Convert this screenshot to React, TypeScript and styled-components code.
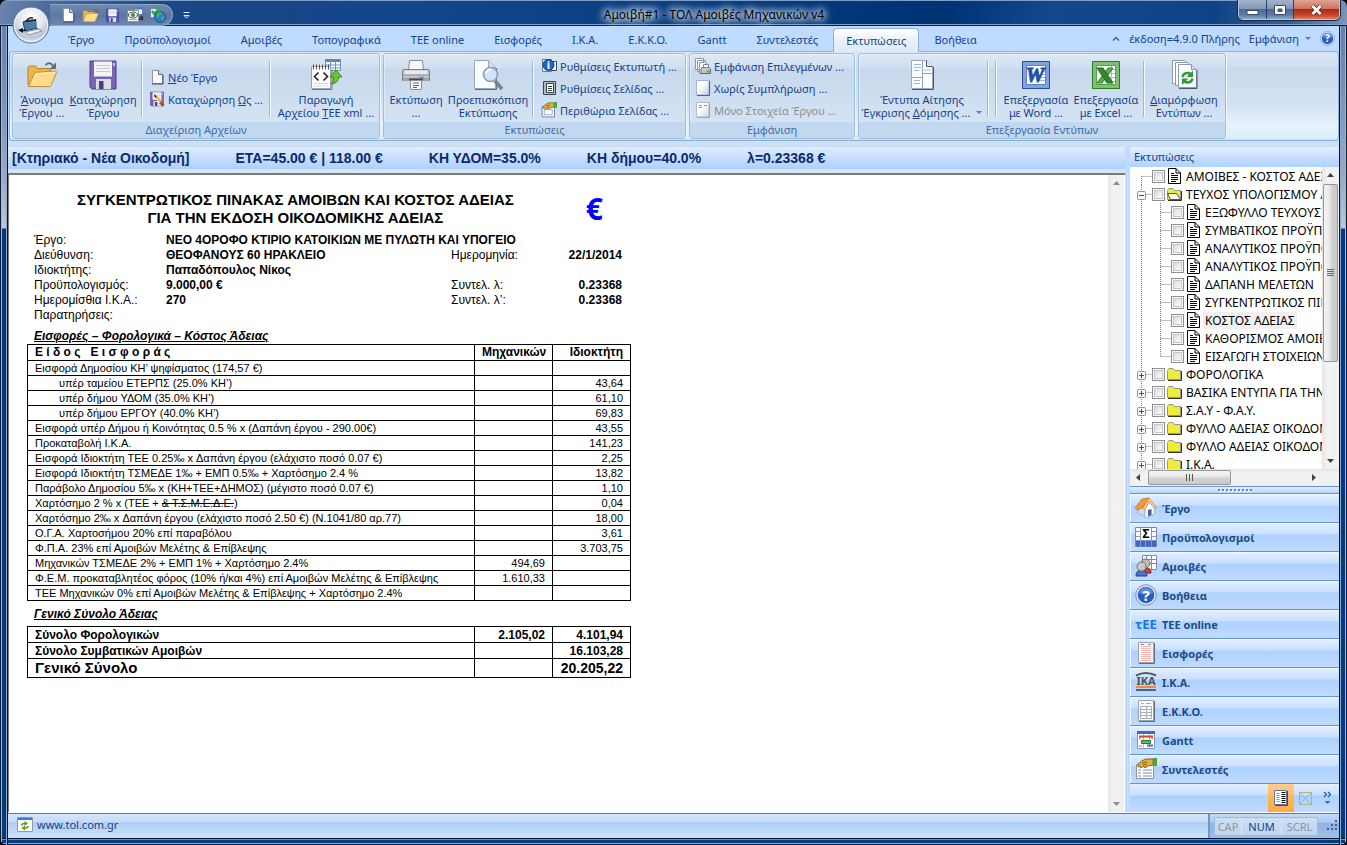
import React from "react";
import styled, { createGlobalStyle, css } from "styled-components";

const ui = `"Noto Sans", "Open Sans", sans-serif`;
const doc = `"Liberation Sans", Arial, sans-serif`;
const navy = "#15428b";

const Global = createGlobalStyle`
  *, *::before, *::after { box-sizing: border-box; }
  body { margin: 0; background: #000; font-family: ${ui}; font-size: 11px; color: ${navy}; }
  button { font: inherit; color: inherit; background: none; border: 0; padding: 0; margin: 0; }
  a { color: inherit; text-decoration: none; }
  h1, h2, p, ul, dl, dd, dt { margin: 0; padding: 0; }
  svg { display: block; flex: none; }
`;

/* ---------- window frame ---------- */

const Frame = styled.div`
  display: flex;
  flex-direction: column;
  height: 100vh;
  min-height: 700px;
  padding: 1px 8px 7px;
  border-radius: 7px;
  overflow: hidden;
  position: relative;
  background:
    linear-gradient(#7f9ec4, #7f9ec4) 0 0 / 100% 1px no-repeat,
    linear-gradient(90deg, #101c30 0 1px, #9fb8d8 1px 2px, transparent 2px 6px, #8fa9cc 6px 7px, #06142c 7px 8px) 0 26px / 8px 100% no-repeat,
    linear-gradient(270deg, #101c30 0 1px, #9fb8d8 1px 2px, transparent 2px 6px, #8fa9cc 6px 7px, #06142c 7px 8px) 100% 26px / 8px 100% no-repeat,
    linear-gradient(0deg, #0a1a30 0 1px, #8fb0d8 1px 2px, transparent 2px 5px, #6d93c2 5px 6px, #06142c 6px 7px) 0 100% / 100% 7px no-repeat,
    linear-gradient(180deg, #5f7ba8 0, #6f88b0 60px, #9aabc6 180px, #bcc7d8 228px, #003a7d 229px, #003c84 100%);
`;

const TitleBar = styled.header`
  position: relative;
  display: flex;
  align-items: flex-start;
  height: 25px;
  flex: none;
  margin: 0 -8px;
  padding: 0 7px 0 50px;
  border-bottom: 1px solid #0a1c3c;
  box-shadow: inset 0 -1px 0 #7d9fca;
  background: linear-gradient(100deg, #6a84ad 0, #4a6a9c 50px, #1d4785 160px, #12458c 420px, #0d3f84 45%, #003274 70%, #14488d 78%, #0f4285 90%, #3a6299 96%, #7d95b8 100%);
`;

const OrbButton = styled.button`
  position: absolute;
  left: 12px;
  top: 5px;
  width: 38px;
  height: 38px;
  border-radius: 50%;
  z-index: 3;
`;

const QuickBar = styled.div`
  display: flex;
  align-items: center;
  gap: 6px;
  height: 22px;
  margin-top: 3px;
  padding: 0 6px 0 10px;
  border: 1px solid #8ba3c6;
  border-left: 0;
  border-radius: 0 11px 11px 0;
  background: linear-gradient(#7189ae, #5c78a3 50%, #6c86ae);
`;

const QuickMore = styled.button`
  margin: 10px 0 0 10px;
`;

const Title = styled.div`
  flex: 1;
  text-align: center;
  font-size: 12px;
  line-height: 27px;
  color: #000;
  text-shadow: 0 0 6px #fff, 0 0 8px #dfe9f8, 0 0 10px #c7d7ee, 0 0 12px #b3c8e6;
`;

const WindowButtons = styled.div`
  display: flex;
  height: 20px;
  margin-top: -1px;
  border: 1px solid #b6c6dc;
  border-top: 0;
  border-radius: 0 0 5px 5px;
  overflow: hidden;
  box-shadow: 0 0 0 1px #14284a;
`;

const WindowButton = styled.button<{ $close?: boolean }>`
  display: flex;
  align-items: center;
  justify-content: center;
  width: ${(p) => (p.$close ? 46 : 27)}px;
  & + & { border-left: 1px solid #26406c; }
  background: ${(p) =>
    p.$close
      ? "linear-gradient(#e0a393, #cf6f5c 48%, #b02a12 50%, #c4472c 80%, #e08060)"
      : "linear-gradient(#a3b4cc, #7f96b8 48%, #4d6a95 50%, #5f7da8 80%, #8da8cc)"};
`;

const Client = styled.div`
  flex: 1;
  min-height: 0;
  display: flex;
  flex-direction: column;
  background: #bfdbff;
`;

/* ---------- tabs ---------- */

const TabRow = styled.nav`
  display: flex;
  align-items: flex-end;
  height: 25px;
  flex: none;
  padding: 0 4px 0 45px;
`;

const Tab = styled.a<{ $active?: boolean }>`
  height: 23px;
  line-height: 22px;
  padding: 0 14px;
  border: 1px solid transparent;
  border-bottom: 0;
  white-space: nowrap;
  ${(p) =>
    p.$active &&
    css`
      position: relative;
      z-index: 2;
      height: 24px;
      margin-bottom: -1px;
      padding: 0 12px;
      border-color: #8db2e3;
      border-radius: 4px 4px 0 0;
      background: linear-gradient(#fff, #e6effa 60%, #dfeaf6);
      line-height: 23px;
    `}
`;

const TabTools = styled.div`
  display: flex;
  align-items: center;
  gap: 9px;
  margin-left: auto;
  height: 25px;
  white-space: nowrap;
`;

/* ---------- ribbon ---------- */

const Ribbon = styled.section`
  display: flex;
  gap: 3px;
  flex: none;
  height: 90px;
  margin: 0 0 0 1px;
  padding: 1px 2px;
  border: 1px solid #8db2e3;
  border-radius: 4px;
  border-bottom-color: #8aaedd;
  background: linear-gradient(#dbe6f4, #d0deef 16%, #c8d9ed 18%, #d4e3f3 60%, #e7f2fd 85%, #d5f0fb);
  box-shadow: inset 0 -1px 0 #b8ecfb;
`;

const Group = styled.div<{ $w: number }>`
  display: flex;
  flex-direction: column;
  width: ${(p) => p.$w}px;
  border: 1px solid #9ebfdb;
  border-radius: 3px;
  box-shadow: inset 1px 1px 0 #f0f6fc88, 1px 0 0 #eef5fc;
  background: linear-gradient(#dee8f5, #d1dfef 16%, #c7d8ed 18%, #d8e6f5 100%);
`;

const GroupBody = styled.div`
  display: flex;
  align-items: flex-start;
  height: 68px;
  padding: 1px 2px 0;
`;

const GroupLabel = styled.div`
  height: 16px;
  line-height: 15px;
  text-align: center;
  color: #3e6aaa;
  background: #c2d8f0;
  border-radius: 0 0 3px 3px;
`;

const BigButton = styled.button<{ $w: number }>`
  display: flex;
  flex-direction: column;
  align-items: center;
  gap: 2px;
  width: ${(p) => p.$w}px;
  flex: none;
  padding-top: 4px;
  line-height: 13px;
  white-space: nowrap;
  text-align: center;
`;

const Arrow = styled.span`
  display: inline-block;
  margin: 0 0 3px 6px;
  border: 3px solid transparent;
  border-top-color: #5a7fb5;
  border-bottom: 0;
`;

const Divider = styled.span<{ $tight?: boolean }>`
  width: 2px;
  height: 56px;
  margin: 6px 4px 0;
  margin-left: ${(p) => (p.$tight ? 2 : 4)}px;
  border-left: 1px solid #9ab8dc;
  border-right: 1px solid #f4f9ff;
  flex: none;
`;

const SmallStack = styled.div<{ $low?: boolean }>`
  display: flex;
  flex-direction: column;
  padding: ${(p) => (p.$low ? "11px 0 0 2px" : "0 0 0 3px")};
`;

const SmallButton = styled.button`
  display: flex;
  align-items: center;
  gap: 3px;
  height: 22px;
  white-space: nowrap;
  &:disabled { color: #8d8d8d; }
`;

/* ---------- work area ---------- */

const Work = styled.div`
  flex: 1;
  min-height: 0;
  display: flex;
  gap: 5px;
  padding-top: 6px;
  background: linear-gradient(#cfe0f3 0 5px, #bfdbff 6px);
`;

const MainColumn = styled.main`
  flex: 1;
  min-width: 0;
  display: flex;
  flex-direction: column;
`;

const InfoBar = styled.div`
  display: flex;
  align-items: center;
  gap: 46px;
  height: 22px;
  flex: none;
  padding-left: 4px;
  margin-bottom: 4px;
  background: linear-gradient(#e0edff, #c6deff 50%, #aed0ff);
  box-shadow: 0 4px 0 #d6e5f5;
  font: bold 14px ${doc};
  color: #0b2a68;
  white-space: nowrap;
`;

const Viewer = styled.div`
  flex: 1;
  min-height: 0;
  display: flex;
  border: 1px solid #7b7b76;
  border-width: 2px 0 0 1px;
  background: #fff;
  overflow: hidden;
`;

const Page = styled.article`
  flex: 1;
  min-width: 0;
  padding: 16px 0 0 18px;
  font-family: ${doc};
  color: #000;
`;

const Sheet = styled.div`
  width: 604px;
`;

const Heading = styled.div`
  display: flex;
  align-items: center;
  justify-content: space-between;
  padding: 0 28px 0 50px;
`;

const DocTitle = styled.h1`
  font-size: 15px;
  line-height: 18px;
  text-align: center;
`;

const Euro = styled.span`
  font-family: ${ui};
  font-size: 30px;
  font-weight: bold;
  line-height: 36px;
  color: #0000ff;
`;

const Fields = styled.dl`
  display: grid;
  grid-template-columns: 132px 285px 92px 79px;
  padding: 6px 8px 0 7px;
  font-size: 12px;
  line-height: 15px;
  white-space: nowrap;
  dd { font-weight: bold; }
`;

const Amount = styled.dd`
  text-align: right;
`;

const Wide = styled.dd`
  grid-column: 2 / -1;
`;

const Section = styled.h2`
  padding: 6px 0 0 7px;
  font-size: 12px;
  font-style: italic;
  line-height: 15px;
  text-decoration: underline;
`;

const Data = styled.table<{ $totals?: boolean }>`
  width: 604px;
  table-layout: fixed;
  border-collapse: collapse;
  margin-top: ${(p) => (p.$totals ? 4 : 0)}px;
  font-size: ${(p) => (p.$totals ? 12 : 11)}px;
  font-weight: ${(p) => (p.$totals ? "bold" : "normal")};
  th, td {
    height: ${(p) => (p.$totals ? 16 : 15)}px;
    padding: 0 7px;
    border: 1px solid #000;
    line-height: 14px;
    text-align: right;
    white-space: nowrap;
  }
  th:first-child, td:first-child { text-align: left; }
  thead th { height: 16px; font-size: 12px; line-height: 15px; }
`;

const Spaced = styled.span`
  white-space: pre;
`;

const GrandRow = styled.tr`
  td, th { height: 19px; font-size: 14px; line-height: 18px; }
  th { font-size: 15px; }
`;

const Indent = styled.span`
  padding-left: 24px;
`;

/* ---------- scroll bars ---------- */

const VScroll = styled.div<{ $edge?: boolean }>`
  display: flex;
  flex-direction: column;
  width: 17px;
  flex: none;
  background: linear-gradient(90deg, #e6e6e6, #f2f2f2 30%, #f0f0f0);
  border-right: ${(p) => (p.$edge ? "1px solid #fff" : "0")};
`;

const HScroll = styled.div`
  display: flex;
  align-items: center;
  height: 17px;
  flex: none;
  padding-right: 17px;
  background: linear-gradient(#e6e6e6, #f2f2f2 30%, #f0f0f0);
`;

const ScrollButton = styled.button`
  display: flex;
  align-items: center;
  justify-content: center;
  width: 17px;
  height: 17px;
  flex: none;
`;

const Spacer = styled.div`
  flex: 1;
`;

const VThumb = styled.div`
  display: flex;
  align-items: center;
  justify-content: center;
  width: 15px;
  height: 178px;
  margin-left: 1px;
  border: 1px solid #979797;
  border-radius: 2px;
  background: linear-gradient(90deg, #f5f5f5, #e6e6e6 48%, #d4d4d4 52%, #c9c9c9);
`;

const HThumb = styled.div`
  display: flex;
  align-items: center;
  justify-content: center;
  width: 83px;
  height: 15px;
  margin-left: 1px;
  border: 1px solid #979797;
  border-radius: 2px;
  background: linear-gradient(#f5f5f5, #e6e6e6 48%, #d4d4d4 52%, #c9c9c9);
`;

/* ---------- side panel ---------- */

const Side = styled.aside`
  display: flex;
  flex-direction: column;
  width: 209px;
  flex: none;
`;

const SideTitle = styled.h2`
  height: 20px;
  flex: none;
  padding-left: 4px;
  font-size: 11px;
  font-weight: normal;
  line-height: 20px;
  background: linear-gradient(#e3efff, #c8dfff 50%, #afd2ff);
`;

const TreeBox = styled.div`
  flex: 1;
  min-height: 0;
  display: flex;
  background: #fff;
`;

const Tree = styled.ul`
  flex: 1;
  min-width: 0;
  overflow: hidden;
  list-style: none;
  padding-left: 2px;
`;

const TreeRow = styled.li`
  display: flex;
  align-items: center;
  height: 18px;
  white-space: nowrap;
`;

const Check = styled.input`
  appearance: none;
  width: 13px;
  height: 13px;
  margin: 0 2px 0 0;
  flex: none;
  border: 1px solid #8e8f8f;
  background: linear-gradient(135deg, #cfd3d8, #fbfbfb 80%);
  box-shadow: inset 0 0 0 1px #f8f8f8, inset 0 0 0 2px #c4c8cd;
`;

const TreeLabel = styled.label<{ $selected?: boolean }>`
  margin-left: 2px;
  padding: 0 2px;
  color: #000;
  font-size: 12px;
  line-height: 17px;
  background: ${(p) => (p.$selected ? "#f0f0f0" : "none")};
`;

const Splitter = styled.div`
  display: flex;
  align-items: center;
  justify-content: center;
  height: 8px;
  flex: none;
  border-top: 1px solid #6593cf;
  border-bottom: 1px solid #6593cf;
  background: linear-gradient(#e3efff, #b3d4ff);
`;

const NavButton = styled.button`
  display: flex;
  align-items: center;
  gap: 5px;
  height: 29px;
  flex: none;
  padding-left: 5px;
  border-bottom: 1px solid #6593cf;
  background: linear-gradient(#e3efff, #c8dfff 40%, #add1ff 42%, #c0dbff);
  box-shadow: inset 1px 1px 0 #f2f8ff;
  font-weight: bold;
  color: #1f4a86;
`;

const NavFooter = styled.div`
  display: flex;
  align-items: stretch;
  justify-content: flex-end;
  height: 28px;
  flex: none;
  padding-right: 1px;
  background: linear-gradient(#e3efff, #c8dfff 40%, #add1ff 42%, #c0dbff);
`;

const FooterButton = styled.button<{ $on?: boolean }>`
  display: flex;
  align-items: center;
  justify-content: center;
  width: ${(p) => (p.$on ? 26 : 22)}px;
  background: ${(p) => (p.$on ? "linear-gradient(#ffcf92, #ffb85c 45%, #ffab3f)" : "none")};
`;

/* ---------- status bar ---------- */

const Status = styled.footer`
  display: flex;
  align-items: stretch;
  height: 26px;
  flex: none;
  border-top: 1px solid #f4f9ff;
  box-shadow: inset 0 1px 0 #567db0;
  background: linear-gradient(#d6e6fa, #c6dbf5 35%, #b0cff5 38%, #c9def7 90%);
`;

const StatusLink = styled.a`
  display: flex;
  align-items: center;
  flex: 1;
  gap: 4px;
  padding: 0 0 2px 9px;
`;

const StatusKeys = styled.div`
  display: flex;
  align-items: center;
  width: 131px;
  margin-top: 1px;
  padding-left: 4px;
  border-left: 2px solid #7396c4;
  background: linear-gradient(#c5dbf7, #a9c8f0 35%, #8fb3e3 38%, #9dbfe9);
`;

const KeyBox = styled.div`
  display: flex;
  height: 19px;
  border: 1px solid #9dbbe0;
  border-radius: 2px;
  background: linear-gradient(#cfe0f5, #bdd3ee);
`;

const Key = styled.span<{ $on?: boolean; $w: number }>`
  width: ${(p) => p.$w}px;
  text-align: center;
  line-height: 18px;
  color: ${(p) => (p.$on ? navy : "#8d95a3")};
  & + & { border-left: 1px solid #d9e7f8; }
`;

/* ---------- icons ---------- */

type IconProps = { s?: number };

const Glyph = styled.text`
  font-family: ${ui};
  font-weight: bold;
  text-anchor: middle;
`;

const NewDoc = ({ s = 16 }: IconProps) => (
  <svg width={s} height={s} viewBox="0 0 16 16">
    <path d="M3.5 1.5h6l4 4v9h-10z" fill="#fdfdff" stroke="#8a96ac" />
    <path d="M3 15h11V6" stroke="#3f4b63" fill="none" />
    <path d="M9.5 1.5v4h4" fill="#cfdaea" stroke="#5c6880" />
  </svg>
);

const Folder = ({ s = 32 }: IconProps) => (
  <svg width={s} height={s} viewBox="0 0 32 32">
    <path d="M2 8.5q0-1.500 1.500-1.500h6l2 2.500h11.500q1.500 0 1.500 1.500v3l-3 13h-17.500q-2 0-2-2z" fill="#e9b44c" stroke="#b98325" />
    <path d="M2.500 27.500l6-13q.5-1 2-1.200l18-1.300q2.500 0 2 1.500l-5.500 13q-.5 1.200-2 1.200z" fill="#fcdc8a" stroke="#c58f2f" />
    <path d="M5.500 25l4.500-10 18-1.500" stroke="#fff3c8" fill="none" />
    <path d="M19.500 6q4-4 8 1" stroke="#5c6d85" strokeWidth="1.8" fill="none" />
    <path d="M30 3.500v6.500h-6.500z" fill="#5c6d85" />
  </svg>
);

const Save = ({ s = 32, pen = false, blue = false }: IconProps & { pen?: boolean; blue?: boolean }) => (
  <svg width={s} height={s} viewBox="0 0 32 32">
    <path d="M3 2h26v28H5l-2-2z" fill={blue ? "#3c50c0" : "#7665b5"} stroke="#4d3f8c" />
    <path d="M7 2.500h18v15H7z" fill="#f4f4f6" />
    <path d="M9 6.500h14M9 9.500h14M9 12.500h14" stroke="#c9c9d2" />
    <path d="M9 20h15v10H9z" fill="#dcdde4" />
    <path d="M12 22h4.500v8H12z" fill="#4b3d83" />
    <path d="M26 4h2v3h-2z" fill="#cbc4ea" />
    {pen && (
      <>
        <path d="M12 10l12 13" stroke="#fff" strokeWidth="6" />
        <path d="M14 11l12 13" stroke="#e8b33c" strokeWidth="5" />
        <path d="M25 20l6 8-3 3-8-6z" fill="#a8542c" />
        <path d="M10 7l6 3-4 4z" fill="#222" />
      </>
    )}
  </svg>
);

const XmlIcon = ({ s = 32 }: IconProps) => (
  <svg width={s} height={s} viewBox="0 0 32 32">
    <path d="M15.500.5h15v11h-15z" fill="#fff" stroke="#6f8fc0" />
    <path d="M15.500.5h15v2.500h-15z" fill="#5b82c4" />
    <path d="M15 6h16M15 9h16M20.500 1v10M25.500 1v10" stroke="#6f8fc0" />
    <path d="M1.500 7.500h19v22h-19z" fill="#fff" stroke="#9aa3b0" />
    <path d="M2 30.500h20v-20" stroke="#6f7784" fill="none" />
    <path d="M3.500 5.500v5M6.500 5.500v5M9.500 5.500v5M12.500 5.500v5M15.500 5.500v5M18.500 5.500v5" stroke="#555" />
    <path d="M8.500 13.500l-4 4 4 4M13.500 13.500l4 4-4 4" stroke="#222" strokeWidth="1.6" fill="none" />
    <path d="M4 24.500h14M4 27h14" stroke="#d5d9e0" />
    <path d="M26 11l6 7h-3.500q0 6-7 7 3-3 2-7H20z" fill="#6cc82e" stroke="#3c8a14" />
  </svg>
);

const Printer = ({ s = 32 }: IconProps) => (
  <svg width={s} height={s} viewBox="0 0 32 32">
    <path d="M9.500 1.500h13l1 10h-15z" fill="#f7f8fb" stroke="#8b8f98" />
    <path d="M2.500 12q0-1.500 2-1.500h23q2 0 2 1.500v9.500h-27z" fill="#c9cacd" stroke="#7a7c82" />
    <path d="M5 11.500h22v4H5z" fill="#e9eaec" />
    <path d="M2.500 16h27" stroke="#8a8c92" />
    <path d="M3 18.500h26V22H3z" fill="#a3a5ab" />
    <path d="M19 17.500h5v2h-5z" fill="#4fa0ff" />
    <path d="M9 19.500h14v2H9z" fill="#46484e" />
    <path d="M10.500 21.500h11v9h-11z" fill="#fbfbfd" stroke="#8b8f98" />
    <path d="M13 24h6M13 26.500h6M13 28.500h4" stroke="#5d6570" />
  </svg>
);

const Preview = ({ s = 32 }: IconProps) => (
  <svg width={s} height={s} viewBox="0 0 32 32">
    <path d="M2.500 1.500h14l7 7v21h-21z" fill="#fbfcfe" stroke="#9aa5b8" />
    <path d="M3 30.500h21.500V9" stroke="#606a7c" fill="none" />
    <path d="M16.500 1.500v7h7" fill="#d5dfed" stroke="#9aa5b8" />
    <path d="M23 22l7 8" stroke="#7d828c" strokeWidth="3.5" />
    <circle cx="18.500" cy="15.500" r="7" fill="#cfe4fb" stroke="#8c9db5" strokeWidth="1.6" />
    <path d="M14 14.500q1-4 5-4" stroke="#fff" strokeWidth="2" fill="none" />
  </svg>
);

const InfoIcon = () => (
  <svg width="16" height="16" viewBox="0 0 16 16">
    <path d="M1.500 1.500h9v12h-9z" fill="#fff" stroke="#6b7686" />
    <path d="M10.500 3.500h5v9h-5z" fill="#fff" stroke="#39465c" />
    <circle cx="7.500" cy="7" r="5.500" fill="#1c67c8" stroke="#0d4593" />
    <Glyph x="7.500" y="11" fontSize="11" fill="#fff">i</Glyph>
  </svg>
);

const PageSetup = () => (
  <svg width="16" height="16" viewBox="0 0 16 16">
    <path d="M2.500 1.500h12v13h-12z" fill="#b4b9c2" stroke="#39424f" />
    <path d="M5.500 3.500h7v9h-7z" fill="#fff" stroke="#39424f" />
    <path d="M7 6.500h4M7 8.500h4M7 10.500h4" stroke="#39424f" />
  </svg>
);

const HandForm = ({ s = 16, margins = false }: IconProps & { margins?: boolean }) => (
  <svg width={s} height={s} viewBox="0 0 22 22">
    <path d="M1.500 6.500h17v14h-17z" fill="#fdfdff" stroke={margins ? "#4a5f8c" : "#8b93a5"} />
    {margins ? (
      <path d="M4.500 10.500h11v7h-11z" fill="none" stroke="#2f62e0" strokeDasharray="2 1" />
    ) : (
      <path d="M3 12h3M3 15h3M3 18h3M8 12h9M8 15h9M8 18h9" stroke="#7f8fb8" />
    )}
    <path d="M3 6q4-4 8-5h7v6l-5 1-3 2-1-2-3 2-1-2-2 1z" fill="#dfae45" stroke="#8a6417" />
    <path d="M7 5l5-1M8 7l4-1" stroke="#8a6417" />
    <path d="M18 0h4v8h-4z" fill="#45a836" />
  </svg>
);

const Stack = () => (
  <svg width="16" height="16" viewBox="0 0 16 16">
    <path d="M.5.5h8v11h-8zM2.500 2.500h8v11h-8z" fill="#fff" stroke="#8a96aa" />
    <path d="M4.500 4.500h6l3 3v8h-9z" fill="#fdfdff" stroke="#8a96aa" />
    <path d="M7 9.500h7l1.500 2v4H6v-4z" fill="#c5c8cf" stroke="#5d6470" />
    <path d="M8.500 6.500h5v3h-5z" fill="#fff" stroke="#7b8290" />
    <path d="M11.500 12.500h3v2h-3z" fill="#34c32c" />
  </svg>
);

const BlankPage = ({ grey = false }: { grey?: boolean }) => (
  <svg width="16" height="16" viewBox="0 0 16 16">
    <defs>
      <linearGradient id={grey ? "pageGrey" : "pageBlue"} x1="0" y1="0" x2="1" y2="1">
        <stop offset=".4" stopColor="#fff" />
        <stop offset="1" stopColor={grey ? "#ccd2de" : "#b9cdf0"} />
      </linearGradient>
    </defs>
    <path d="M1.500.5H14V15H1.500z" fill={`url(#${grey ? "pageGrey" : "pageBlue"})`} stroke={grey ? "#b4bbc8" : "#a3b4d6"} />
    <path d="M2 15.500h12.500V1" stroke={grey ? "#9aa1af" : "#4c639a"} fill="none" />
    {grey && <path d="M4 3.500h3M9 3.500h3M4 5.500h3" stroke="#8f96a5" />}
  </svg>
);

const FormPage = () => (
  <svg width="32" height="32" viewBox="0 0 32 32">
    <path d="M5.500 1.500h15l6 6v22h-21z" fill="#fbfcff" stroke="#9aa8c4" />
    <path d="M6 30.500h21.500V8" stroke="#4a5670" fill="none" />
    <path d="M20.500 1.500v6h6" fill="#dde6f3" stroke="#4a5670" />
    <path d="M16.500 2v28M6 18.500h10M16 14.500h10" stroke="#8fa2cc" />
    <path d="M8 5.500h7M8 8.500h7M8 11.500h5M18.500 11h6M8 21.500h6M8 24.500h6" stroke="#9db3e0" />
  </svg>
);

const Serif = styled.text`
  font: italic bold 21px "Liberation Serif", serif;
  text-anchor: middle;
`;

const WordIcon = () => (
  <svg width="32" height="32" viewBox="0 0 32 32">
    <path d="M2.500 2.500h27v27h-27z" fill="#7fa3e0" stroke="#2b4f9e" />
    <path d="M6.500 6.500h19v19h-19z" fill="#fff" stroke="#5b80c8" />
    <path d="M20 9.500h5M21 12.500h4M21 15.500h4M20 18.500h5M19 21.500h6" stroke="#9fb6e4" />
    <Serif x="15" y="23" fill="#2450a8" stroke="#2450a8">W</Serif>
  </svg>
);

const ExcelIcon = () => (
  <svg width="32" height="32" viewBox="0 0 32 32">
    <path d="M2.500 2.500h27v27h-27z" fill="#7cc070" stroke="#2c7a2a" />
    <path d="M6.500 6.500h19v19h-19z" fill="#fff" stroke="#55a04c" />
    <path d="M17 10.500h8M17 14.500h8M17 18.500h8M17 22.500h8M21.500 7v18" stroke="#9ccf8c" />
    <path d="M7 24L18 9h5L12 24z" fill="#5fb04e" stroke="#2c7a2a" />
    <path d="M7 9h6l10 15h-6z" fill="#2f8a2a" stroke="#1d6a1a" />
  </svg>
);

const Refresh = () => (
  <svg width="32" height="32" viewBox="0 0 32 32">
    <path d="M4.500 1.500h12l4 4v19h-16z" fill="#fff" stroke="#8e99ae" />
    <path d="M7.500 3.500h12l4 4v19h-16z" fill="#fff" stroke="#8e99ae" />
    <path d="M10.500 5.500h13l5 5v18h-18z" fill="#fbfcff" stroke="#8e99ae" />
    <path d="M11 29.500h18V11" stroke="#4c566b" fill="none" />
    <path d="M23.500 5.500v5h5" fill="#cfdaea" stroke="#8e99ae" />
    <path d="M14.500 18q1-4.500 6-4l2 1" stroke="#2f9a3a" strokeWidth="2.6" fill="none" />
    <path d="M25 11.500v6.500h-6.500z" fill="#2f9a3a" />
    <path d="M24.500 19.500q-1 4.500-6 4l-2-1" stroke="#2f9a3a" strokeWidth="2.6" fill="none" />
    <path d="M14 26v-6.500h6.500z" fill="#2f9a3a" />
  </svg>
);

const Help = ({ s = 16 }: IconProps) => (
  <svg width={s} height={s} viewBox="0 0 22 22">
    <circle cx="11" cy="11" r="10.3" fill="#dfe7f6" stroke="#7f93bb" />
    <circle cx="11" cy="11" r="8.3" fill="#2a5cc4" />
    <path d="M4 9q2-6 7-6t7 6q-7 3-14 0z" fill="#5b8ae2" />
    <Glyph x="11" y="16.500" fontSize="15" fill="#fff">?</Glyph>
  </svg>
);

const XmlQuick = () => (
  <svg width="18" height="16" viewBox="0 0 18 16">
    <path d="M8.500.5h8v7h-8z" fill="#fff" stroke="#5b82c4" />
    <path d="M8.500 1.500h8" stroke="#4a78c8" strokeWidth="2" />
    <path d="M1.500 3.500h11v11h-11z" fill="#fff" stroke="#8a93a3" />
    <ellipse cx="7" cy="8" rx="4.500" ry="3" fill="#e6eef0" stroke="#555" />
    <circle cx="7" cy="8" r="2" fill="#3d9442" />
    <path d="M3 12.500h8" stroke="#9aa" />
    <path d="M13 12l3-3M13.500 12.500h3v-3" stroke="#333" strokeWidth="1.5" fill="none" />
  </svg>
);

const GlobeQuick = () => (
  <svg width="16" height="16" viewBox="0 0 16 16">
    <path d="M.5 1.500h9v9h-9z" fill="#dfeaf7" stroke="#6a87b5" />
    <path d="M2 4l2.500 3L10 0" stroke="#2fae2c" strokeWidth="2.5" fill="none" />
    <circle cx="10" cy="10" r="5.500" fill="#2c79d2" stroke="#1b4f94" />
    <path d="M7 6.500q3-2 5-.5-1 2.500-3 2.500l-1 3q-2-2-1-5zM11 10l3-1q1 3-2 5z" fill="#4bb648" />
  </svg>
);

const Orb = () => (
  <svg width="38" height="38" viewBox="0 0 38 38">
    <defs>
      <radialGradient id="orb" cx=".5" cy=".3" r=".7">
        <stop offset="0" stopColor="#fff" />
        <stop offset=".5" stopColor="#e1e7f0" />
        <stop offset=".8" stopColor="#b9c4d5" />
        <stop offset="1" stopColor="#f4f8fd" />
      </radialGradient>
    </defs>
    <circle cx="19" cy="19" r="18" fill="url(#orb)" stroke="#5a6f92" />
    <circle cx="19" cy="19" r="16.500" fill="none" stroke="#f2f6fb" />
    <path d="M11 16l13-2 2 8-13 3z" fill="#4a7ca8" stroke="#253c55" />
    <path d="M15 14q2-3 6-2" stroke="#222" strokeWidth="1.5" fill="none" />
    <path d="M11 16l3-2 12-1-2 2z" fill="#20262e" />
    <path d="M6 24l5-2v5z" fill="#111" />
    <path d="M9 24.500h5" stroke="#111" strokeWidth="1.5" />
    <path d="M13 26l14-3 3 2-13 4z" fill="#eef1f5" stroke="#8a93a0" />
    <path d="M25 12l1 10" stroke="#e8eef5" strokeWidth="2" />
  </svg>
);

const TreeDoc = () => (
  <svg width="15" height="16" viewBox="0 0 15 16">
    <path d="M1.500.5H9L13.500 5v10.500h-12z" fill="#fff" stroke="#000" />
    <path d="M9 .5V5h4.500" fill="none" stroke="#000" />
    <path d="M4 5.500h3M4 7.500h7M4 9.500h7M4 11.500h7M4 13.500h5" stroke="#000" />
  </svg>
);

const TreeFolder = ({ open = false }: { open?: boolean }) => (
  <svg width="15" height="16" viewBox="0 0 15 16">
    <defs>
      <pattern id="dither" width="2" height="2" patternUnits="userSpaceOnUse">
        <path d="M0 0h2v2H0z" fill="#f2ef3c" />
        <path d="M0 0h1v1H0zM1 1h1v1H1z" fill="#dcdcb4" />
      </pattern>
    </defs>
    <path d="M.5 13.500v-9l1.500-2h4l1.500 2h6v9z" fill="url(#dither)" stroke="#98977c" />
    <path d="M1 14.500h13.500V5" stroke="#333" fill="none" />
    {open && <path d="M3.500 13.500L.5 7.500h9l4 6z" fill="#fbfbe0" stroke="#555" />}
  </svg>
);

type RailProps = { w: number; half?: "top" | "bottom"; stub?: boolean; box?: "+" | "-" };

const Rail = ({ w, half, stub, box }: RailProps) => {
  const x = w - 10.5;
  return (
    <svg width={w} height="18" viewBox={`0 0 ${w} 18`}>
      <path d={`M${x} ${half === "bottom" ? 9 : 0}V${half === "top" ? 10 : 18}`} stroke="#808080" strokeDasharray="1 1" />
      {stub && <path d={`M${x} 9.5H${w}`} stroke="#808080" strokeDasharray="1 1" />}
      {box && (
        <>
          <rect x={x - 4} y="6.5" width="8" height="8" rx="1" fill="#f6f6f6" stroke="#919191" />
          <path d={`M${x - 2.5} 10.5h5` + (box === "+" ? `M${x} 8v5` : "")} stroke="#33509a" />
        </>
      )}
    </svg>
  );
};

const triangles = { u: "M1 6l3.5-4L8 6z", d: "M1 3l3.5 4L8 3z", l: "M6 1L2 4.5 6 8z", r: "M3 1l4 3.5L3 8z" };

const Tri = ({ dir, c = "#404040" }: { dir: keyof typeof triangles; c?: string }) => (
  <svg width="9" height="9" viewBox="0 0 9 9">
    <path d={triangles[dir]} fill={c} />
  </svg>
);

const House = () => (
  <svg width="22" height="22" viewBox="0 0 22 22">
    <path d="M3 9l7-5 3 7v9.500l-10-4z" fill="#c9dcf2" stroke="#8fa5c8" strokeWidth=".7" />
    <path d="M10 11l4.500-6 5 6v6l-8 4-1.500-1z" fill="#f4f7fc" stroke="#8a9ab5" strokeWidth=".7" />
    <path d="M0 11L7 2l7-1-6 9-5 3z" fill="#f39a38" stroke="#b8661a" strokeWidth=".7" />
    <path d="M7.500 11.500L14 1l7.500 9.500-2 .5-5.500-6.500L9.500 13z" fill="#fbd9a8" stroke="#c37a22" strokeWidth=".7" />
    <path d="M13 13l3.500-1v6L13 19.500z" fill="#4a5f94" />
  </svg>
);

const Sigma = () => (
  <svg width="22" height="22" viewBox="0 0 22 22">
    <path d="M.5 1.500h21v19H.5z" fill="#f8faff" stroke="#7486aa" />
    <path d="M1 15h20v5.500H1z" fill="#3f66c4" />
    <path d="M0 5.500h22M0 10.500h22M0 14.500h22M5.500 1v20M10.500 15v6M16.500 1v20" stroke="#8496bd" />
    <path d="M6 2h10v11H6z" fill="#fff" />
    <Glyph x="11" y="12" fontSize="12" fill="#000">Σ</Glyph>
  </svg>
);

const People = () => (
  <svg width="22" height="22" viewBox="0 0 22 22">
    <path d="M7.500.5h14v14h-14z" fill="#fff" stroke="#7b8aa8" />
    <path d="M7 4.500h15M7 8.500h15M11.500 0v15M16.500 0v15" stroke="#7b8aa8" />
    <path d="M7 18q0-5 4.500-5t4.500 5z" fill="#d83a3a" stroke="#7b1f1f" />
    <circle cx="10.500" cy="8.500" r="4.500" fill="#bcb8b2" stroke="#77736c" />
    <path d="M1 21q0-6 5.500-6t5.500 6z" fill="#4a6fd0" stroke="#24408c" />
    <circle cx="6.500" cy="11.500" r="4.500" fill="#ccc8c1" stroke="#77736c" />
  </svg>
);

const TeeMark = () => (
  <svg width="22" height="22" viewBox="0 0 22 22" aria-hidden="true">
    <Glyph x="11" y="16" fontSize="13" fill="#1c74d8">τEE</Glyph>
  </svg>
);

const IkaMark = () => (
  <svg width="22" height="22" viewBox="0 0 22 22" aria-hidden="true">
    <path d="M1 4.500q10-5 20 0" stroke="#555c68" strokeWidth="2" fill="none" />
    <Glyph x="11" y="14" fontSize="11" fill="#4c525e">IKA</Glyph>
    <path d="M1 15h20v2H1z" fill="#f08a24" />
    <path d="M1 18h20v2H1z" fill="#5d6470" />
  </svg>
);

const SheetIcon = ({ red = false }: { red?: boolean }) => (
  <svg width="22" height="22" viewBox="0 0 22 22">
    <path d="M3.500.5h15v20h-15z" fill={red ? "#fdf4f2" : "#fafbfd"} stroke="#9aa3b3" />
    <path d="M4 21.500h15.500V1" stroke="#636c7d" fill="none" />
    {red ? (
      <path d="M6 4.500h10M6 6.500h10M6 8.500h10M6 10.500h10M6 12.500h10M6 14.500h10M6 16.500h10M6 18.500h10" stroke="#f7b9b2" />
    ) : (
      <path d="M6 3.500h3M11 3.500h5M5.500 6.500h11v12h-11zM6 9.500h10M6 12.500h10M6 15.500h10M11.500 6.500v12" stroke="#a5aebc" fill="none" />
    )}
    {red && <path d="M6 2.500h3M13 2.500h3" stroke="#5f86cf" />}
  </svg>
);

const GanttIcon = () => (
  <svg width="22" height="22" viewBox="0 0 22 22">
    <path d="M2.500 2.500h17v17h-17z" fill="#fff" stroke="#8a97b0" />
    <path d="M2 2h18v3H2z" fill="#3a6ccc" />
    <path d="M8.500 5v14M14.500 5v14" stroke="#b5bfce" />
    <path d="M4 7.500h14" stroke="#d8452e" strokeWidth="2" />
    <path d="M5 7v3.500M17 7v3.500" stroke="#d8452e" />
    <path d="M6.500 11.500h9v3h-9z" fill="#63b863" stroke="#2c7a2c" />
    <path d="M12 16.500h6" stroke="#3a6ccc" strokeWidth="2" />
    <path d="M4 17h3" stroke="#777" />
  </svg>
);

const StatusIcon = () => (
  <svg width="16" height="16" viewBox="0 0 16 16">
    <path d="M.5.5h15v14H.5z" fill="#fdfef8" stroke="#8a99b8" />
    <path d="M1 1h14v2H1z" fill="#3f74d8" />
    <path d="M4.500 8.500q0-2 3.500-2" stroke="#5f9a14" strokeWidth="1.6" fill="none" />
    <path d="M7.500 4l3.500 2.500L7.500 9z" fill="#5f9a14" />
    <path d="M11 9q0 2-3.500 2" stroke="#5f9a14" strokeWidth="1.6" fill="none" />
    <path d="M8 8.500L4.500 11 8 13.500z" fill="#5f9a14" />
  </svg>
);

/* ---------- content ---------- */

const tabs = ["Έργο", "Προϋπολογισμοί", "Αμοιβές", "Τοπογραφικά", "TEE online", "Εισφορές", "Ι.Κ.Α.", "Ε.Κ.Κ.Ο.", "Gantt", "Συντελεστές", "Εκτυπώσεις", "Βοήθεια"];

const rows: [React.ReactNode, string, string][] = [
  ["Εισφορά Δημοσίου ΚΗ’ ψηφίσματος (174,57 €)", "", ""],
  [<Indent>υπέρ ταμείου ΕΤΕΡΠΣ (25.0% ΚΗ’)</Indent>, "", "43,64"],
  [<Indent>υπέρ δήμου ΥΔΟΜ (35.0% ΚΗ’)</Indent>, "", "61,10"],
  [<Indent>υπέρ δήμου ΕΡΓΟΥ (40.0% ΚΗ’)</Indent>, "", "69,83"],
  ["Εισφορά υπέρ Δήμου ή Κοινότητας 0.5 % x (Δαπάνη έργου - 290.00€)", "", "43,55"],
  ["Προκαταβολή Ι.Κ.Α.", "", "141,23"],
  ["Εισφορά Ιδιοκτήτη ΤΕΕ 0.25‰ x Δαπάνη έργου (ελάχιστο ποσό 0.07 €)", "", "2,25"],
  ["Εισφορά Ιδιοκτήτη ΤΣΜΕΔΕ 1‰ + ΕΜΠ 0.5‰ + Χαρτόσημο 2.4 %", "", "13,82"],
  ["Παράβολο Δημοσίου 5‰ x (ΚΗ+ΤΕΕ+ΔΗΜΟΣ) (μέγιστο ποσό 0.07 €)", "", "1,10"],
  [<>Χαρτόσημο 2 % x (ΤΕΕ + <s>&amp; Τ.Σ.Μ.Ε.Δ.Ε.</s>)</>, "", "0,04"],
  ["Χαρτόσημο 2‰ x Δαπάνη έργου (ελάχιστο ποσό 2.50 €) (Ν.1041/80 αρ.77)", "", "18,00"],
  ["Ο.Γ.Α. Χαρτοσήμου 20% επί παραβόλου", "", "3,61"],
  ["Φ.Π.Α. 23% επί Αμοιβών Μελέτης & Επίβλεψης", "", "3.703,75"],
  ["Μηχανικών ΤΣΜΕΔΕ 2% + ΕΜΠ 1% + Χαρτόσημο 2.4%", "494,69", ""],
  ["Φ.Ε.Μ. προκαταβλητέος φόρος (10% ή/και 4%) επί Αμοιβών Μελέτης & Επίβλεψης", "1.610,33", ""],
  ["ΤΕΕ Μηχανικών 0% επί Αμοιβών Μελέτης & Επίβλεψης + Χαρτόσημο 2.4%", "", ""],
];

type Node = { text: string; level: 0 | 1; kind: "doc" | "open" | "closed"; last?: boolean; selected?: boolean };

const tree: Node[] = [
  { text: "ΑΜΟΙΒΕΣ - ΚΟΣΤΟΣ ΑΔΕΙΑΣ", level: 0, kind: "doc" },
  { text: "ΤΕΥΧΟΣ ΥΠΟΛΟΓΙΣΜΟΥ ΑΜΟΙΒΩΝ", level: 0, kind: "open" },
  { text: "ΕΞΩΦΥΛΛΟ ΤΕΥΧΟΥΣ", level: 1, kind: "doc" },
  { text: "ΣΥΜΒΑΤΙΚΟΣ ΠΡΟΫΠΟΛΟΓΙΣΜΟΣ", level: 1, kind: "doc" },
  { text: "ΑΝΑΛΥΤΙΚΟΣ ΠΡΟΫΠΟΛΟΓΙΣΜΟΣ", level: 1, kind: "doc" },
  { text: "ΑΝΑΛΥΤΙΚΟΣ ΠΡΟΫΠΟΛΟΓΙΣΜΟΣ", level: 1, kind: "doc" },
  { text: "ΔΑΠΑΝΗ ΜΕΛΕΤΩΝ", level: 1, kind: "doc" },
  { text: "ΣΥΓΚΕΝΤΡΩΤΙΚΟΣ ΠΙΝΑΚΑΣ", level: 1, kind: "doc" },
  { text: "ΚΟΣΤΟΣ ΑΔΕΙΑΣ", level: 1, kind: "doc", selected: true },
  { text: "ΚΑΘΟΡΙΣΜΟΣ ΑΜΟΙΒΩΝ", level: 1, kind: "doc" },
  { text: "ΕΙΣΑΓΩΓΗ ΣΤΟΙΧΕΙΩΝ", level: 1, kind: "doc", last: true },
  { text: "ΦΟΡΟΛΟΓΙΚΑ", level: 0, kind: "closed" },
  { text: "ΒΑΣΙΚΑ ΕΝΤΥΠΑ ΓΙΑ ΤΗΝ", level: 0, kind: "closed" },
  { text: "Σ.Α.Υ - Φ.Α.Υ.", level: 0, kind: "closed" },
  { text: "ΦΥΛΛΟ ΑΔΕΙΑΣ ΟΙΚΟΔΟΜΗΣ", level: 0, kind: "closed" },
  { text: "ΦΥΛΛΟ ΑΔΕΙΑΣ ΟΙΚΟΔΟΜΗΣ", level: 0, kind: "closed" },
  { text: "Ι.Κ.Α.", level: 0, kind: "closed" },
];

const nav: [React.ReactNode, string][] = [
  [<House />, "Έργο"],
  [<Sigma />, "Προϋπολογισμοί"],
  [<People />, "Αμοιβές"],
  [<Help s={22} />, "Βοήθεια"],
  [<TeeMark />, "TEE online"],
  [<SheetIcon red />, "Εισφορές"],
  [<IkaMark />, "Ι.Κ.Α."],
  [<SheetIcon />, "Ε.Κ.Κ.Ο."],
  [<GanttIcon />, "Gantt"],
  [<HandForm s={22} />, "Συντελεστές"],
];

const TreeItem = ({ node, id }: { node: Node; id: string }) => (
  <TreeRow>
    {node.level === 0 ? (
      <Rail w={20} half={id === "node-0" ? "bottom" : undefined} stub box={node.kind === "open" ? "-" : node.kind === "closed" ? "+" : undefined} />
    ) : (
      <>
        <Rail w={20} />
        <Rail w={19} half={node.last ? "top" : undefined} stub />
      </>
    )}
    <Check type="checkbox" id={id} />
    {node.kind === "doc" ? <TreeDoc /> : <TreeFolder open={node.kind === "open"} />}
    <TreeLabel htmlFor={id} $selected={node.selected}>{node.text}</TreeLabel>
  </TreeRow>
);

export default function App() {
  return (
    <Frame>
      <Global />
      <TitleBar>
        <OrbButton aria-label="Μενού εφαρμογής"><Orb /></OrbButton>
        <QuickBar>
          <button aria-label="Νέο"><NewDoc /></button>
          <button aria-label="Άνοιγμα"><Folder s={17} /></button>
          <button aria-label="Αποθήκευση"><Save s={15} blue /></button>
          <button aria-label="Εξαγωγή"><XmlQuick /></button>
          <button aria-label="Έλεγχος"><GlobeQuick /></button>
        </QuickBar>
        <QuickMore aria-label="Προσαρμογή">
          <svg width="7" height="8" viewBox="0 0 7 8"><path d="M.5 1.5h6M1 4.5h5L3.5 7z" stroke="#dfe8f5" fill="none" /></svg>
        </QuickMore>
        <Title>Αμοιβή#1 - ΤΟΛ Αμοιβές Μηχανικών v4</Title>
        <WindowButtons>
          <WindowButton aria-label="Ελαχιστοποίηση">
            <svg width="13" height="12" viewBox="0 0 13 12"><rect x="1" y="6.5" width="11" height="4" fill="#fff" stroke="#3b4a66" /></svg>
          </WindowButton>
          <WindowButton aria-label="Μεγιστοποίηση">
            <svg width="13" height="12" viewBox="0 0 13 12"><path d="M.5 1.500h11v9H.5zM4 5h4v2.500H4z" fill="#fff" fillRule="evenodd" stroke="#3b4a66" /></svg>
          </WindowButton>
          <WindowButton $close aria-label="Κλείσιμο">
            <svg width="13" height="12" viewBox="0 0 13 12"><path d="M2.500 2l8 8M10.500 2l-8 8" stroke="#4a2a2a" strokeWidth="4.5" /><path d="M2.500 2l8 8M10.500 2l-8 8" stroke="#fff" strokeWidth="2.8" /></svg>
          </WindowButton>
        </WindowButtons>
      </TitleBar>

      <Client>
        <TabRow>
          {tabs.map((t) => (
            <Tab key={t} href="#" $active={t === "Εκτυπώσεις"}>{t}</Tab>
          ))}
          <TabTools>
            <svg width="8" height="6" viewBox="0 0 8 6"><path d="M1 4.500L4 1.500l3 3" stroke="#3c66a8" strokeWidth="1.5" fill="none" /></svg>
            <span>έκδοση=4.9.0 Πλήρης</span>
            <button>Εμφάνιση<Arrow /></button>
            <button aria-label="Βοήθεια"><Help s={15} /></button>
          </TabTools>
        </TabRow>

        <Ribbon>
          <Group $w={368}>
            <GroupBody>
              <BigButton $w={54}><Folder /><span><u>Ά</u>νοιγμα<br />Έργου ...</span></BigButton>
              <BigButton $w={68}><Save /><span><u>Κ</u>αταχώρηση<br />Έργου</span></BigButton>
              <Divider />
              <SmallStack $low>
                <SmallButton><NewDoc /><span><u>Ν</u>έο Έργο</span></SmallButton>
                <SmallButton><Save s={16} pen /><span>Καταχώρηση <u>Ω</u>ς ...</span></SmallButton>
              </SmallStack>
              <Spacer />
              <Divider />
              <BigButton $w={102}><XmlIcon /><span>Παραγωγή<br />Αρχείου <u>Τ</u>ΕΕ xml ...</span></BigButton>
            </GroupBody>
            <GroupLabel>Διαχείριση Αρχείων</GroupLabel>
          </Group>
          <Group $w={303}>
            <GroupBody>
              <BigButton $w={60}><Printer /><span>Εκτύπωση<br />...</span></BigButton>
              <BigButton $w={84}><Preview /><span>Προεπισκόπιση<br />Εκτύπωσης</span></BigButton>
              <Divider $tight />
              <SmallStack>
                <SmallButton><InfoIcon /><span>Ρυθμίσεις Εκτυπωτή ...</span></SmallButton>
                <SmallButton><PageSetup /><span>Ρυθμίσεις Σελίδας ...</span></SmallButton>
                <SmallButton><HandForm margins /><span>Περιθώρια Σελίδας ...</span></SmallButton>
              </SmallStack>
            </GroupBody>
            <GroupLabel>Εκτυπώσεις</GroupLabel>
          </Group>
          <Group $w={166}>
            <GroupBody>
              <SmallStack>
                <SmallButton><Stack /><span>Εμφάνιση Επιλεγμένων ...</span></SmallButton>
                <SmallButton><BlankPage /><span>Χωρίς Συμπλήρωση ...</span></SmallButton>
                <SmallButton disabled><BlankPage grey /><span>Μόνο Στοιχεία Έργου ...</span></SmallButton>
              </SmallStack>
            </GroupBody>
            <GroupLabel>Εμφάνιση</GroupLabel>
          </Group>
          <Group $w={368}>
            <GroupBody>
              <BigButton $w={122}><FormPage /><span>Έντυπα Αίτησης<br />Έγκρισης <u>Δ</u>όμησης ...<Arrow /></span></BigButton>
              <Divider />
              <Divider $tight />
              <BigButton $w={70}><WordIcon /><span>Επεξεργασία<br />με Word ...</span></BigButton>
              <BigButton $w={70}><ExcelIcon /><span>Επεξεργασία<br />με Excel ...</span></BigButton>
              <Divider $tight />
              <BigButton $w={70}><Refresh /><span><u>Δ</u>ιαμόρφωση<br />Εντύπων ...</span></BigButton>
            </GroupBody>
            <GroupLabel>Επεξεργασία Εντύπων</GroupLabel>
          </Group>
        </Ribbon>

        <Work>
          <MainColumn>
            <InfoBar>
              <span>[Κτηριακό - Νέα Οικοδομή]</span>
              <span>ETA=45.00 € | 118.00 €</span>
              <span>ΚΗ ΥΔΟΜ=35.0%</span>
              <span>ΚΗ δήμου=40.0%</span>
              <span>λ=0.23368 €</span>
            </InfoBar>
            <Viewer>
              <Page>
                <Sheet>
                  <Heading>
                    <DocTitle>ΣΥΓΚΕΝΤΡΩΤΙΚΟΣ ΠΙΝΑΚΑΣ ΑΜΟΙΒΩΝ ΚΑΙ ΚΟΣΤΟΣ ΑΔΕΙΑΣ<br />ΓΙΑ ΤΗΝ ΕΚΔΟΣΗ ΟΙΚΟΔΟΜΙΚΗΣ ΑΔΕΙΑΣ</DocTitle>
                    <Euro>€</Euro>
                  </Heading>
                  <Fields>
                    <dt>Έργο:</dt><Wide>ΝΕΟ 4ΟΡΟΦΟ ΚΤΙΡΙΟ ΚΑΤΟΙΚΙΩΝ ΜΕ ΠΥΛΩΤΗ ΚΑΙ ΥΠΟΓΕΙΟ</Wide>
                    <dt>Διεύθυνση:</dt><dd>ΘΕΟΦΑΝΟΥΣ 60 ΗΡΑΚΛΕΙΟ</dd>
                    <dt>Ημερομηνία:</dt><Amount>22/1/2014</Amount>
                    <dt>Ιδιοκτήτης:</dt><Wide>Παπαδόπουλος Νίκος</Wide>
                    <dt>Προϋπολογισμός:</dt><dd>9.000,00 €</dd>
                    <dt>Συντελ. λ:</dt><Amount>0.23368</Amount>
                    <dt>Ημερομίσθια Ι.Κ.Α.:</dt><dd>270</dd>
                    <dt>Συντελ. λ’:</dt><Amount>0.23368</Amount>
                    <dt>Παρατηρήσεις:</dt><Wide />
                  </Fields>
                  <Section>Εισφορές – Φορολογικά – Κόστος Άδειας</Section>
                  <Data>
                    <colgroup><col /><col width="78" /><col width="78" /></colgroup>
                    <thead>
                      <tr>
                        <th scope="col"><Spaced>Ε ί δ ο ς   Ε ι σ φ ο ρ ά ς</Spaced></th>
                        <th scope="col">Μηχανικών</th>
                        <th scope="col">Ιδιοκτήτη</th>
                      </tr>
                    </thead>
                    <tbody>
                      {rows.map(([a, b, c], i) => (
                        <tr key={i}><td>{a}</td><td>{b}</td><td>{c}</td></tr>
                      ))}
                    </tbody>
                  </Data>
                  <Section>Γενικό Σύνολο Άδειας</Section>
                  <Data $totals>
                    <colgroup><col /><col width="78" /><col width="78" /></colgroup>
                    <tbody>
                      <tr><th scope="row">Σύνολο Φορολογικών</th><td>2.105,02</td><td>4.101,94</td></tr>
                      <tr><th scope="row">Σύνολο Συμβατικών Αμοιβών</th><td /><td>16.103,28</td></tr>
                      <GrandRow><th scope="row">Γενικό Σύνολο</th><td /><td>20.205,22</td></GrandRow>
                    </tbody>
                  </Data>
                </Sheet>
              </Page>
              <VScroll $edge>
                <ScrollButton aria-label="Πάνω"><Tri dir="u" c="#8d8d8d" /></ScrollButton>
                <Spacer />
                <ScrollButton aria-label="Κάτω"><Tri dir="d" c="#8d8d8d" /></ScrollButton>
              </VScroll>
            </Viewer>
          </MainColumn>

          <Side>
            <SideTitle>Εκτυπώσεις</SideTitle>
            <TreeBox>
              <Tree>
                {tree.map((n, i) => (
                  <TreeItem key={i} node={n} id={`node-${i}`} />
                ))}
              </Tree>
              <VScroll>
                <ScrollButton aria-label="Πάνω"><Tri dir="u" /></ScrollButton>
                <VThumb><svg width="7" height="8" viewBox="0 0 7 8"><path d="M0 .5h7M0 2.500h7M0 4.500h7M0 6.500h7" stroke="#666" /></svg></VThumb>
                <Spacer />
                <ScrollButton aria-label="Κάτω"><Tri dir="d" /></ScrollButton>
              </VScroll>
            </TreeBox>
            <HScroll>
              <ScrollButton aria-label="Αριστερά"><Tri dir="l" /></ScrollButton>
              <HThumb><svg width="8" height="7" viewBox="0 0 8 7"><path d="M.5 0v7M3.500 0v7M6.500 0v7" stroke="#555" /></svg></HThumb>
              <Spacer />
              <ScrollButton aria-label="Δεξιά"><Tri dir="r" /></ScrollButton>
            </HScroll>
            <Splitter>
              <svg width="34" height="3" viewBox="0 0 34 3"><path d="M0 2h34" stroke="#fff" strokeWidth="2" strokeDasharray="2 2" strokeDashoffset="-1" /><path d="M0 1h34" stroke="#5a84c0" strokeWidth="2" strokeDasharray="2 2" /></svg>
            </Splitter>
            {nav.map(([icon, label]) => (
              <NavButton key={label}>{icon}{label}</NavButton>
            ))}
            <NavFooter>
              <FooterButton $on aria-label="Εκτυπώσεις">
                <svg width="14" height="16" viewBox="0 0 14 16"><path d="M.5.5h12v14H.5z" fill="#fff" stroke="#5d76a8" /><path d="M1 15.500h12.500V1" stroke="#33486f" fill="none" /><path d="M2.500 3.500h3M2.500 5.500h3M2.500 7.500h3M2.500 9.500h3M2.500 11.500h3" stroke="#7f92b8" /><path d="M7.500 2.500h4M7.500 4.500h4M7.500 6.500h4M7.500 8.500h4M7.500 10.500h4M7.500 12.500h4" stroke="#000" /></svg>
              </FooterButton>
              <FooterButton aria-label="Κλείσιμο λίστας">
                <svg width="13" height="13" viewBox="0 0 13 13"><path d="M.5.5h12v12H.5zM.5.5l12 12M12.500.5l-12 12" stroke="#b9b46a" fill="none" /></svg>
              </FooterButton>
              <FooterButton aria-label="Περισσότερα">
                <svg width="9" height="14" viewBox="0 0 9 14"><path d="M1 1l2.500 2.500L1 6M5 1l2.500 2.500L5 6" stroke="#2b5ba8" fill="none" strokeWidth="1.3" /><path d="M1.500 10h6l-3 3z" fill="#3c6db5" /></svg>
              </FooterButton>
            </NavFooter>
          </Side>
        </Work>

        <Status>
          <StatusLink href="#"><StatusIcon />www.tol.com.gr</StatusLink>
          <StatusKeys>
            <KeyBox>
              <Key $w={26}>CAP</Key>
              <Key $w={40} $on>NUM</Key>
              <Key $w={36}>SCRL</Key>
            </KeyBox>
            <Spacer />
            <svg width="12" height="12" viewBox="0 0 12 12"><path d="M8 0h2v2H8zM4 4h2v2H4zM8 4h2v2H8zM0 8h2v2H0zM4 8h2v2H4zM8 8h2v2H8z" fill="#3f6398" /></svg>
          </StatusKeys>
        </Status>
      </Client>
    </Frame>
  );
}
